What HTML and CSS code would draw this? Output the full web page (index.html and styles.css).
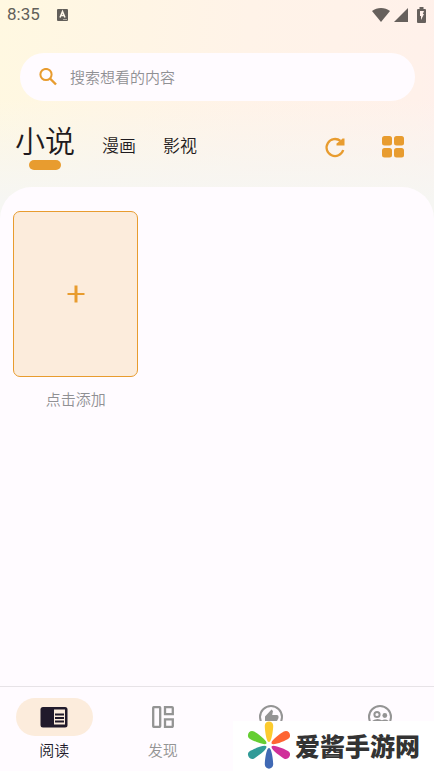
FILE: index.html
```html
<!DOCTYPE html>
<html lang="zh-CN">
<head>
<meta charset="utf-8">
<meta name="viewport" content="width=device-width, initial-scale=1">
<title>小说</title>
<link rel="stylesheet" href="styles.css">
</head>
<body>
<header class="top">
  <div class="status">
    <span class="time">8:35</span>
    <svg class="badge" width="12" height="14" viewBox="0 0 12 14" aria-hidden="true"><rect y="1" width="11" height="12" rx="1" fill="#625f5a"/><path d="M3 9.500 5.500 3.500 8 9.500M4 7.500h3" fill="none" stroke="#fff8ea" stroke-width="1.500"/><path d="M6.500 11.500h1M8.500 11.500h1" stroke="#fff8ea"/></svg>
    <span class="signals">
      <svg width="18" height="14" viewBox="0 0 18 14" aria-hidden="true"><path d="M0 3C5-1 13-1 18 3L9 14Z" fill="#66605c"/></svg>
      <svg width="14" height="14" viewBox="0 0 14 14" aria-hidden="true"><path d="M14 0V14H0Z" fill="#66605c"/></svg>
      <svg class="battery" width="9" height="16" viewBox="0 0 9 16" aria-hidden="true"><path d="M2.500 0h4v2H8a1 1 0 0 1 1 1v12a1 1 0 0 1-1 1H1a1 1 0 0 1-1-1V3a1 1 0 0 1 1-1h1.500Z" fill="#66605c"/><path d="M3 4h4L5.800 7H7L4 13V9H3Z" fill="#fff0ea"/></svg>
    </span>
  </div>
  <label class="search">
    <svg width="18" height="18" viewBox="0 0 18 18" aria-hidden="true"><circle cx="7" cy="6.500" r="5.600" fill="none" stroke="#e89c2f" stroke-width="2"/><path d="M11 10.500 17 16.500" stroke="#e89c2f" stroke-width="2.400"/></svg>
    <input class="search-input" type="search" placeholder="搜索想看的内容" aria-label="搜索">
  </label>
  <div class="toolbar">
    <div class="tabs">
      <button class="tab tab-active" type="button">小说</button>
      <button class="tab" type="button">漫画</button>
      <button class="tab" type="button">影视</button>
    </div>
    <div class="actions">
      <button class="action" type="button" aria-label="刷新"><svg width="24" height="24" viewBox="0 0 24 24"><path d="M20.200 15A8.500 8.500 0 1 1 17.500 6" fill="none" stroke="#e89c2f" stroke-width="2.300"/><path d="M13.500 10.500V8.500L17 6 19.500 3.500h2v7Z" fill="#e89c2f"/></svg></button>
      <button class="action" type="button" aria-label="分类"><svg width="24" height="24" viewBox="0 0 24 24" fill="#e89c2f"><rect x="1" y="1" width="10" height="9.500" rx="2.500"/><rect x="13" y="1" width="10" height="9.500" rx="2.500"/><rect x="1" y="13" width="10" height="9.500" rx="2.500"/><rect x="13" y="13" width="10" height="9.500" rx="2.500"/></svg></button>
    </div>
  </div>
</header>
<main class="shelf">
  <button class="book" type="button">
    <span class="cover"><svg width="18" height="18" viewBox="0 0 18 18" aria-hidden="true"><path d="M.5 9h17" stroke="#e89c2f" stroke-width="2"/><path d="M9 .5v17" stroke="#e89c2f" stroke-width="3"/></svg></span>
    <span class="book-name">点击添加</span>
  </button>
</main>
<nav class="nav">
  <button class="nav-item nav-active" type="button">
    <span class="nav-icon"><svg width="28" height="22" viewBox="0 0 28 22" aria-hidden="true"><rect x=".5" y="1" width="27" height="20.500" rx="2.500" fill="#211a2b"/><path d="M14 3.500h11v15H14Z" fill="#fcecdc"/><path d="M15 8.500h9M15 12h9M15 15.500h9" stroke="#211a2b" stroke-width="2"/></svg></span>
    <span>阅读</span>
  </button>
  <button class="nav-item" type="button">
    <span class="nav-icon"><svg width="22" height="22" viewBox="0 0 22 22" aria-hidden="true" fill="none" stroke="#949494" stroke-width="2.300"><rect x="1.200" y="1.200" width="7" height="19.600" rx=".5"/><path d="M13 1.200H20a.8.8 0 0 1 .8.800v6.200H13ZM13 13.300h7.800V20a.8.8 0 0 1-.8.800H13Z"/></svg></span>
    <span>发现</span>
  </button>
  <button class="nav-item" type="button" aria-label="推荐">
    <span class="nav-icon"><svg width="24" height="24" viewBox="0 0 24 24" aria-hidden="true"><circle cx="12" cy="12" r="11" fill="none" stroke="#949494" stroke-width="2"/><path d="M6 11.500 12.500 4.500 14 6 13.200 10H18q1.500 0 1.500 1.500V13L17 18H6Z" fill="#949494"/></svg></span>
  </button>
  <button class="nav-item" type="button" aria-label="我的">
    <span class="nav-icon"><svg width="24" height="24" viewBox="0 0 24 24" aria-hidden="true" fill="none" stroke="#949494" stroke-width="2"><circle cx="12" cy="12" r="11"/><circle cx="9" cy="9.500" r="2.600"/><circle cx="16.800" cy="10.500" r="2.400" fill="#949494" stroke="none"/><path d="M3.500 17.500Q9 13 14 16.500M14 16.500q3-2 6 0M8 20v-2"/></svg></span>
  </button>
</nav>
<aside class="brand">
  <svg class="flower" width="44" height="50" viewBox="0 0 44 50" aria-hidden="true">
    <defs><path id="petal" d="M22 22C19 22 17.700 8 17.800 5.500C18 0 26 0 26.200 5.500C26.300 8 25 22 22 22Z"/></defs>
    <use href="#petal" fill="#fccb2e"/>
    <use href="#petal" fill="#fe6533" transform="rotate(60 22 25)"/>
    <use href="#petal" fill="#d0309a" transform="rotate(120 22 25)"/>
    <use href="#petal" fill="#4069b4" transform="rotate(180 22 25)"/>
    <use href="#petal" fill="#319b98" transform="rotate(240 22 25)"/>
    <use href="#petal" fill="#65ce32" transform="rotate(300 22 25)"/>
  </svg>
  <span>爱酱手游网</span>
</aside>
</body>
</html>
```
FILE: styles.css
```css
* {
  box-sizing: border-box;
}

body {
  margin: 0;
  min-height: 100vh;
  display: flex;
  flex-direction: column;
  position: relative;
  color: #1f1b20;
  font-family: "Noto Sans CJK SC", sans-serif;
  background:
    linear-gradient(rgba(246, 246, 243, 0) 100px, #f6f6f3 200px),
    linear-gradient(95deg, #fff8e1, #fff3e8 50%, #fff1ea 85%, #ffeeee);
}

button {
  border: 0;
  padding: 0;
  background: none;
  color: inherit;
  font: inherit;
}

svg {
  display: block;
}

.status {
  display: flex;
  align-items: center;
  height: 29px;
  padding: 0 8px 0 7px;
}

.time {
  width: 50px;
  color: #625f5a;
  font: 400 17px/29px Roboto, sans-serif;
}

.signals {
  display: flex;
  align-items: center;
  gap: 4px;
  margin-left: auto;
}

.battery {
  margin-left: 5px;
}

.search {
  display: flex;
  align-items: center;
  gap: 13px;
  height: 48px;
  margin: 24px 19px 0 20px;
  padding: 0 19px;
  border-radius: 24px;
  background: #fffbff;
}

.search-input {
  flex: 1;
  min-width: 0;
  border: 0;
  padding: 0;
  outline: 0;
  background: none;
  font: 350 15px/24px "Noto Sans CJK SC", sans-serif;
}

.search-input::placeholder {
  color: #909094;
  opacity: 1;
}

.toolbar {
  display: flex;
  justify-content: space-between;
  height: 86px;
  padding: 18px 29px 0 15px;
}

.tabs {
  display: flex;
  align-items: baseline;
  gap: 27px;
  height: 52px;
}

.tab {
  font-size: 17px;
  line-height: 24px;
  font-weight: 350;
}

.tab-active {
  font-size: 30px;
  line-height: 41px;
}

.tab-active::after {
  content: "";
  display: block;
  width: 32px;
  height: 10px;
  margin: 0 auto;
  border-radius: 5px;
  background: #e89c2f;
}

.actions {
  display: flex;
  gap: 34px;
  padding-top: 16px;
}

.action {
  height: 24px;
}

.shelf {
  flex: 1;
  padding: 24px 13px;
  border-radius: 32px 32px 0 0;
  background: #fffbff;
}

.book {
  display: flex;
  flex-direction: column;
  gap: 10px;
  width: calc((100% - 32px) / 3);
  min-width: 125px;
}

.cover {
  display: flex;
  align-items: center;
  justify-content: center;
  width: 100%;
  aspect-ratio: 125 / 166;
  border: 1px solid #e89c2f;
  border-radius: 7px;
  background: #fcecdc;
}

.book-name {
  width: 100%;
  color: #909094;
  font-size: 15px;
  line-height: 24px;
  font-weight: 350;
}

.nav {
  display: grid;
  grid-template-columns: repeat(4, 1fr);
  padding: 11px 0 9px;
  border-top: 1px solid #e7e3e7;
  background: #fffbff;
}

.nav-item {
  display: flex;
  flex-direction: column;
  align-items: center;
  gap: 2px;
  color: #949494;
  font-size: 15px;
  line-height: 24px;
  font-weight: 350;
}

.nav-active {
  color: #211a2b;
}

.nav-icon {
  display: flex;
  align-items: center;
  justify-content: center;
  width: 77px;
  height: 38px;
  border-radius: 19px;
}

.nav-active .nav-icon {
  background: #fcecdc;
}

.brand {
  position: absolute;
  right: 0;
  bottom: 0;
  display: flex;
  align-items: center;
  gap: 4px;
  width: 201px;
  height: 50px;
  padding: 0 0 2px 14px;
  background: #fff;
  color: #333;
  font-size: 25px;
  line-height: 36px;
  font-weight: 900;
}
```
